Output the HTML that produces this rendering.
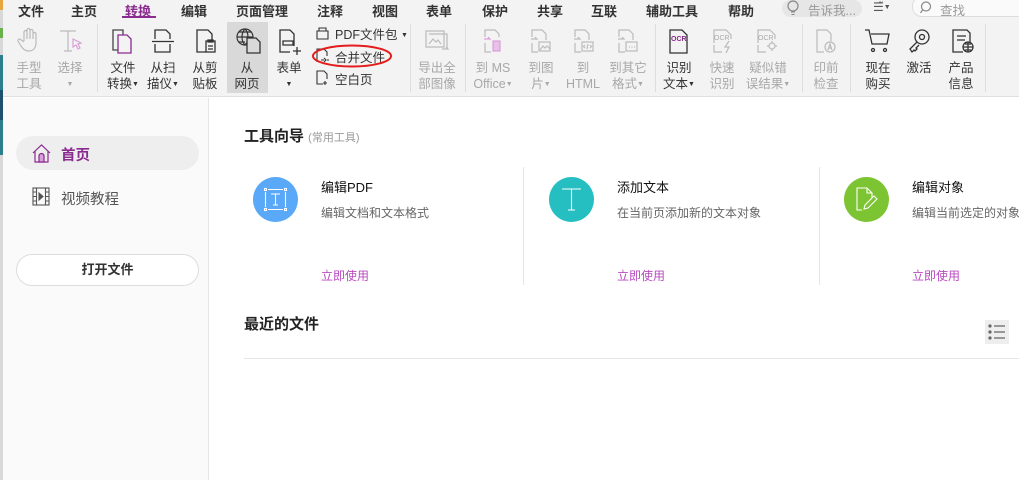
<!DOCTYPE html>
<html><head><meta charset="utf-8">
<style>
*{margin:0;padding:0;box-sizing:border-box}
body{width:1019px;height:480px;overflow:hidden;background:#fff;font-family:"Liberation Sans","Noto Sans CJK SC",sans-serif;position:relative;color:#333}
.a{position:absolute}
.menu{font-size:13px;font-weight:bold;color:#333;top:1px}
.top{left:0;top:0;width:1019px;height:97px;background:#f3f3f3;border-bottom:1px solid #e0e0e0}
.lb{position:absolute;font-size:12.5px;line-height:15.5px;text-align:center;color:#333;top:61px;white-space:nowrap;transform:translateX(-50%)}
.g{color:#a8a8a8}
.sep{position:absolute;top:24px;width:1px;height:68px;background:#ddd}
.ic{position:absolute;top:27px}
.ar{font-size:7px;vertical-align:2px}
</style></head><body>
<div class="a top"></div>
<!-- left strip -->
<div class="a" style="left:0;top:0;width:3px;height:480px;background:#d8d8d8"></div>
<div class="a" style="left:0;top:0;width:3px;height:10px;background:#e8a640"></div>
<div class="a" style="left:0;top:28px;width:3px;height:10px;background:#6ab04c"></div>
<div class="a" style="left:0;top:55px;width:3px;height:100px;background:#2a7f8a"></div>
<div class="a" style="left:0;top:90px;width:3px;height:30px;background:#1d4f6e"></div>

<!-- menu -->
<div class="a menu" style="left:18px">文件</div>
<div class="a menu" style="left:71px">主页</div>
<div class="a menu" style="left:125px;color:#8a2b8f">转换</div>
<div class="a" style="left:122px;top:16px;width:34px;height:2px;background:#8a2b8f"></div>
<div class="a menu" style="left:181px">编辑</div>
<div class="a menu" style="left:236px">页面管理</div>
<div class="a menu" style="left:317px">注释</div>
<div class="a menu" style="left:372px">视图</div>
<div class="a menu" style="left:426px">表单</div>
<div class="a menu" style="left:482px">保护</div>
<div class="a menu" style="left:537px">共享</div>
<div class="a menu" style="left:591px">互联</div>
<div class="a menu" style="left:646px">辅助工具</div>
<div class="a menu" style="left:728px">帮助</div>
<div class="a" style="left:782px;top:0;width:80px;height:17px;border-radius:9px;background:#e6e6e6"></div>
<svg class="a" style="left:786px;top:0" width="14" height="17"><circle cx="7" cy="6" r="5" fill="none" stroke="#888" stroke-width="1.2"/><path d="M5 12h4M5.5 14.5h3" stroke="#888"/></svg>
<div class="a" style="left:808px;top:0;font-size:12.5px;color:#999">告诉我...</div>
<div class="a" style="left:873px;top:0;font-size:12px;color:#555">☰̃<span class="ar">▼</span></div>
<div class="a" style="left:912px;top:-4px;width:120px;height:21px;border:1px solid #ddd;border-radius:10px;background:#fafafa"></div>
<svg class="a" style="left:920px;top:1px" width="13" height="13"><circle cx="6" cy="5.5" r="4.5" fill="none" stroke="#888" stroke-width="1.2"/><path d="M2.5 9l-2 3" stroke="#888" stroke-width="1.2"/></svg>
<div class="a" style="left:940px;top:0;font-size:12.5px;color:#999">查找</div>

<!-- ribbon icons -->
<svg class="ic" style="left:17px" width="24" height="26" fill="none" stroke="#bbb" stroke-width="1.2"><path d="M7 14V5a1.5 1.5 0 013 0v7V3a1.5 1.5 0 013 0v9V4a1.5 1.5 0 013 0v8V7a1.5 1.5 0 013 0v9c0 5-3 8-7 8s-6-2-8-5l-3-5a1.5 1.5 0 012.5-1.5L7 15"/></svg>
<svg class="ic" style="left:58px" width="26" height="26" fill="none" stroke="#bbb" stroke-width="1.2"><path d="M2 4h16M10 4v20M6 24h8"/><path d="M15 12l8 4-3 1 2 4-2 1-2-4-3 2z" stroke="#d9a0d9"/></svg>
<div class="sep" style="left:97px"></div>
<svg class="ic" style="left:110px" width="26" height="28" fill="none" stroke-width="1.3"><path d="M3 3h10v20H3z" stroke="#444"/><path d="M8 8h9l4 4v14H8z" stroke="#8a2b8f" fill="#f3f3f3"/></svg>
<svg class="ic" style="left:151px" width="24" height="28" fill="none" stroke="#333" stroke-width="1.3"><path d="M4 12V3h11l4 4v5M4 17v8h15v-8M1 14.5h22"/></svg>
<svg class="ic" style="left:194px" width="24" height="28" fill="none" stroke="#333" stroke-width="1.3"><path d="M12 25H3V3h11l4 4v6"/><rect x="12" y="14" width="9" height="11"/><path d="M14 13h5v2h-5zM14 19h5M14 22h5"/></svg>
<div class="a" style="left:227px;top:22px;width:41px;height:71px;background:#d9d9d9"></div>
<svg class="ic" style="left:235px" width="28" height="28" fill="none" stroke="#333" stroke-width="1.2"><circle cx="10" cy="10" r="8"/><path d="M2 10h16M10 2c-4 4-4 12 0 16M10 2c4 4 4 12 0 16M4 5h12M4 15h6"/><path d="M12 11h9l4 4v11H12z" fill="#d9d9d9" stroke-width="1.3"/></svg>
<svg class="ic" style="left:277px" width="26" height="30" fill="none" stroke="#333" stroke-width="1.3"><path d="M17 19V7l-4-4H3v22h10"/><path d="M6 14h10v4H6zM20 20v8M16 24h8"/></svg>
<!-- small buttons -->
<svg class="a" style="left:316px;top:26px" width="14" height="14" fill="none" stroke="#333" stroke-width="1.1"><path d="M1 5h11v8H1zM3 5V2h7v3"/></svg>
<div class="a" style="left:335px;top:24px;font-size:12.5px;color:#333">PDF文件包 <span class="ar">▼</span></div>
<svg class="a" style="left:316px;top:48px" width="14" height="16" fill="none" stroke="#333" stroke-width="1.1"><path d="M1 14V1h7l3 3v4M5 12h3M8 10l2 2-2 2M11 12h2"/></svg>
<div class="a" style="left:335px;top:47px;font-size:12.5px;color:#333">合并文件</div>
<svg class="a" style="left:311px;top:43px" width="82" height="26"><ellipse cx="41" cy="13" rx="39" ry="10.5" fill="none" stroke="#e41c1c" stroke-width="2"/></svg>
<svg class="a" style="left:316px;top:70px" width="14" height="16" fill="none" stroke="#333" stroke-width="1.1"><path d="M7 14H1V1h7l3 3v5M9 11v4M7 13h4"/></svg>
<div class="a" style="left:335px;top:69px;font-size:12.5px;color:#333">空白页</div>
<div class="sep" style="left:410px"></div>
<svg class="ic" style="left:424px" width="26" height="26" fill="none" stroke="#bbb" stroke-width="1.2"><path d="M2 4h18v16H2z"/><path d="M5 7h18v14"/><path d="M5 17l4-5 3 3 2-2 3 4"/><path d="M18 22h6l-2-2" /></svg>
<div class="sep" style="left:465px"></div>
<svg class="ic" style="left:482px" width="24" height="28" fill="none" stroke-width="1.2"><path d="M3 10V3h10l4 4v3M3 16v9h6" stroke="#bbb"/><path d="M2 12h6l-2-2" stroke="#d9a0d9"/><rect x="11" y="14" width="7" height="10" stroke="#d9a0d9" fill="#e8c0e8"/></svg>
<svg class="ic" style="left:529px" width="24" height="28" fill="none" stroke="#bbb" stroke-width="1.2"><path d="M3 10V3h10l4 4v6M3 16v9h6M2 12h6l-2-2"/><rect x="10" y="15" width="11" height="9"/><path d="M11 23l3-4 2 2 2-2 3 3"/></svg>
<svg class="ic" style="left:572px" width="24" height="28" fill="none" stroke="#bbb" stroke-width="1.2"><path d="M3 10V3h10l4 4v6M3 16v9h6M2 12h6l-2-2"/><rect x="10" y="15" width="11" height="9"/><path d="M13 18l-1.5 1.5L13 21M18 18l1.5 1.5L18 21M16 17l-1 5"/></svg>
<svg class="ic" style="left:616px" width="24" height="28" fill="none" stroke="#bbb" stroke-width="1.2"><path d="M3 10V3h10l4 4v6M3 16v9h6M2 12h6l-2-2"/><rect x="10" y="15" width="11" height="9"/><path d="M13 20h1M15.5 20h1M18 20h1"/></svg>
<div class="sep" style="left:655px"></div>
<svg class="ic" style="left:666px" width="26" height="28" fill="none" stroke="#333" stroke-width="1.3"><path d="M4 3h12l5 5v18H4z"/><text x="5" y="14" font-size="7" fill="#8a2b8f" stroke="none" font-family="Liberation Sans" font-weight="bold">OCR</text></svg>
<svg class="ic" style="left:710px" width="26" height="28" fill="none" stroke="#bbb" stroke-width="1.2"><path d="M4 16V3h12l5 5v4M4 18v7h8"/><text x="4" y="13" font-size="7" fill="#aaa" stroke="none" font-family="Liberation Sans">OCR</text><path d="M19 14l-4 6h4l-3 6"/></svg>
<svg class="ic" style="left:754px" width="26" height="28" fill="none" stroke="#bbb" stroke-width="1.2"><path d="M4 16V3h12l5 5v4M4 18v7h8"/><text x="4" y="13" font-size="7" fill="#aaa" stroke="none" font-family="Liberation Sans">OCR</text><circle cx="18" cy="19" r="3"/><path d="M18 14v2M18 22v2M13 19h2M21 19h2"/></svg>
<div class="sep" style="left:802px"></div>
<svg class="ic" style="left:814px" width="24" height="28" fill="none" stroke="#bbb" stroke-width="1.2"><path d="M10 25H3V3h10l4 4v7"/><circle cx="16" cy="20" r="5"/><path d="M14 23l2-6 2 6M15 21h2"/></svg>
<div class="sep" style="left:850px"></div>
<svg class="ic" style="left:864px" width="28" height="28" fill="none" stroke="#333" stroke-width="1.3"><path d="M1 3h4l3 14h15l2-10H7"/><circle cx="9" cy="23" r="1.5"/><circle cx="21" cy="23" r="1.5"/></svg>
<svg class="ic" style="left:907px" width="26" height="28" fill="none" stroke="#333" stroke-width="1.3"><circle cx="15" cy="10" r="7"/><circle cx="15" cy="10" r="2.5"/><path d="M10 15L3 22l2 3 2-2 1 1 2-2-1-1 3-3"/></svg>
<svg class="ic" style="left:950px" width="26" height="28" fill="none" stroke="#333" stroke-width="1.3"><path d="M13 25H3V3h14l3 3v9M7 9h9M7 13h8"/><circle cx="18" cy="20" r="5"/><path d="M13 20h10M18 15v10M15 17h6M15 23h6"/></svg>
<div class="sep" style="left:985px"></div>

<!-- labels -->
<div class="lb g" style="left:29px">手型<br>工具</div>
<div class="lb g" style="left:70px">选择<br><span class="ar">▼</span></div>
<div class="lb" style="left:123px">文件<br>转换<span class="ar">▼</span></div>
<div class="lb" style="left:163px">从扫<br>描仪<span class="ar">▼</span></div>
<div class="lb" style="left:205px">从剪<br>贴板</div>
<div class="lb" style="left:247px">从<br>网页</div>
<div class="lb" style="left:289px">表单<br><span class="ar">▼</span></div>
<div class="lb g" style="left:437px">导出全<br>部图像</div>
<div class="lb g" style="left:493px">到 MS<br>Office<span class="ar">▼</span></div>
<div class="lb g" style="left:541px">到图<br>片<span class="ar">▼</span></div>
<div class="lb g" style="left:583px">到<br>HTML</div>
<div class="lb g" style="left:628px">到其它<br>格式<span class="ar">▼</span></div>
<div class="lb" style="left:679px">识别<br>文本<span class="ar">▼</span></div>
<div class="lb g" style="left:722px">快速<br>识别</div>
<div class="lb g" style="left:768px">疑似错<br>误结果<span class="ar">▼</span></div>
<div class="lb g" style="left:826px">印前<br>检查</div>
<div class="lb" style="left:878px">现在<br>购买</div>
<div class="lb" style="left:919px">激活<br>&nbsp;</div>
<div class="lb" style="left:961px">产品<br>信息</div>

<!-- sidebar -->
<div class="a" style="left:3px;top:98px;width:206px;height:382px;background:#fafafa;border-right:1px solid #e6e6e6"></div>
<div class="a" style="left:16px;top:136px;width:183px;height:34px;border-radius:17px;background:#eeeeee"></div>
<svg class="a" style="left:31px;top:143px" width="21" height="21" fill="none" stroke="#8a2b8f" stroke-width="1.2"><path d="M2 10L10.5 2 19 10M4 8v11h13V8"/><path d="M8 19v-6a2.5 2.5 0 015 0v6z" fill="#d9a0d9"/></svg>
<div class="a" style="left:61px;top:144px;font-size:14.5px;font-weight:bold;color:#8a2b8f">首页</div>
<svg class="a" style="left:32px;top:187px" width="18" height="20" fill="none" stroke="#555" stroke-width="1.1"><rect x="1" y="1" width="16" height="17"/><path d="M4.5 1v17M13.5 1v17M1 5h3.5M1 9.5h3.5M1 14h3.5M13.5 5H17M13.5 9.5H17M13.5 14H17"/><path d="M7 6l4 3.5L7 13z" fill="#555"/></svg>
<div class="a" style="left:61px;top:188px;font-size:14.5px;color:#555">视频教程</div>
<div class="a" style="left:16px;top:254px;width:183px;height:32px;border-radius:16px;border:1px solid #ddd;background:#fff;text-align:center;line-height:30px;font-size:13px;font-weight:bold;color:#333">打开文件</div>

<!-- main -->
<div class="a" style="left:244px;top:125px;font-size:15px;font-weight:bold;color:#222">工具向导 <span style="font-size:11px;font-weight:normal;color:#999">(常用工具)</span></div>

<div class="a" style="left:253px;top:177px;width:45px;height:45px;border-radius:50%;background:#5aa9f8"></div>
<svg class="a" style="left:263px;top:187px" width="25" height="25" fill="none" stroke="#fff" stroke-width="1.1"><rect x="1.5" y="1.5" width="2" height="2"/><rect x="21.5" y="1.5" width="2" height="2"/><rect x="1.5" y="21.5" width="2" height="2"/><rect x="21.5" y="21.5" width="2" height="2"/><path d="M5 2.5h15M5 22.5h15M2.5 5v15M22.5 5v15M8 7h9M12.5 7v11M10 18h5"/></svg>
<div class="a" style="left:321px;top:177px;font-size:13px;color:#111">编辑PDF</div>
<div class="a" style="left:321px;top:204px;font-size:12px;color:#666">编辑文档和文本格式</div>
<div class="a" style="left:321px;top:267px;font-size:12px;color:#b94ac0">立即使用</div>

<div class="a" style="left:523px;top:167px;width:1px;height:118px;background:#e6e6e6"></div>
<div class="a" style="left:549px;top:177px;width:45px;height:45px;border-radius:50%;background:#25bfc1"></div>
<svg class="a" style="left:559px;top:187px" width="25" height="25" fill="none" stroke="#fff" stroke-width="1.1"><path d="M3 2h19M12.5 2v21M9 23h7"/></svg>
<div class="a" style="left:617px;top:177px;font-size:13px;color:#111">添加文本</div>
<div class="a" style="left:617px;top:204px;font-size:12px;color:#666">在当前页添加新的文本对象</div>
<div class="a" style="left:617px;top:267px;font-size:12px;color:#b94ac0">立即使用</div>

<div class="a" style="left:819px;top:167px;width:1px;height:118px;background:#e6e6e6"></div>
<div class="a" style="left:844px;top:177px;width:45px;height:45px;border-radius:50%;background:#7dc432"></div>
<svg class="a" style="left:854px;top:186px" width="26" height="27" fill="none" stroke="#fff" stroke-width="1.1"><path d="M8 24H3V2h10l5 5v5M13 2v5h5M10 23l1-4 9-9 3 3-9 9z"/></svg>
<div class="a" style="left:912px;top:177px;font-size:13px;color:#111;white-space:nowrap">编辑对象</div>
<div class="a" style="left:912px;top:204px;font-size:12px;color:#666;white-space:nowrap">编辑当前选定的对象</div>
<div class="a" style="left:912px;top:267px;font-size:12px;color:#b94ac0">立即使用</div>

<div class="a" style="left:244px;top:313px;font-size:15px;font-weight:bold;color:#222">最近的文件</div>
<div class="a" style="left:985px;top:320px;width:24px;height:24px;background:#eee"></div>
<svg class="a" style="left:985px;top:320px" width="24" height="24" fill="none" stroke="#666" stroke-width="1.2"><circle cx="5" cy="6" r="1" fill="#666"/><circle cx="5" cy="12" r="1" fill="#666"/><circle cx="5" cy="18" r="1" fill="#666"/><path d="M9 6h11M9 12h11M9 18h11"/></svg>
<div class="a" style="left:244px;top:358px;width:775px;height:1px;background:#e6e6e6"></div>
</body></html>
